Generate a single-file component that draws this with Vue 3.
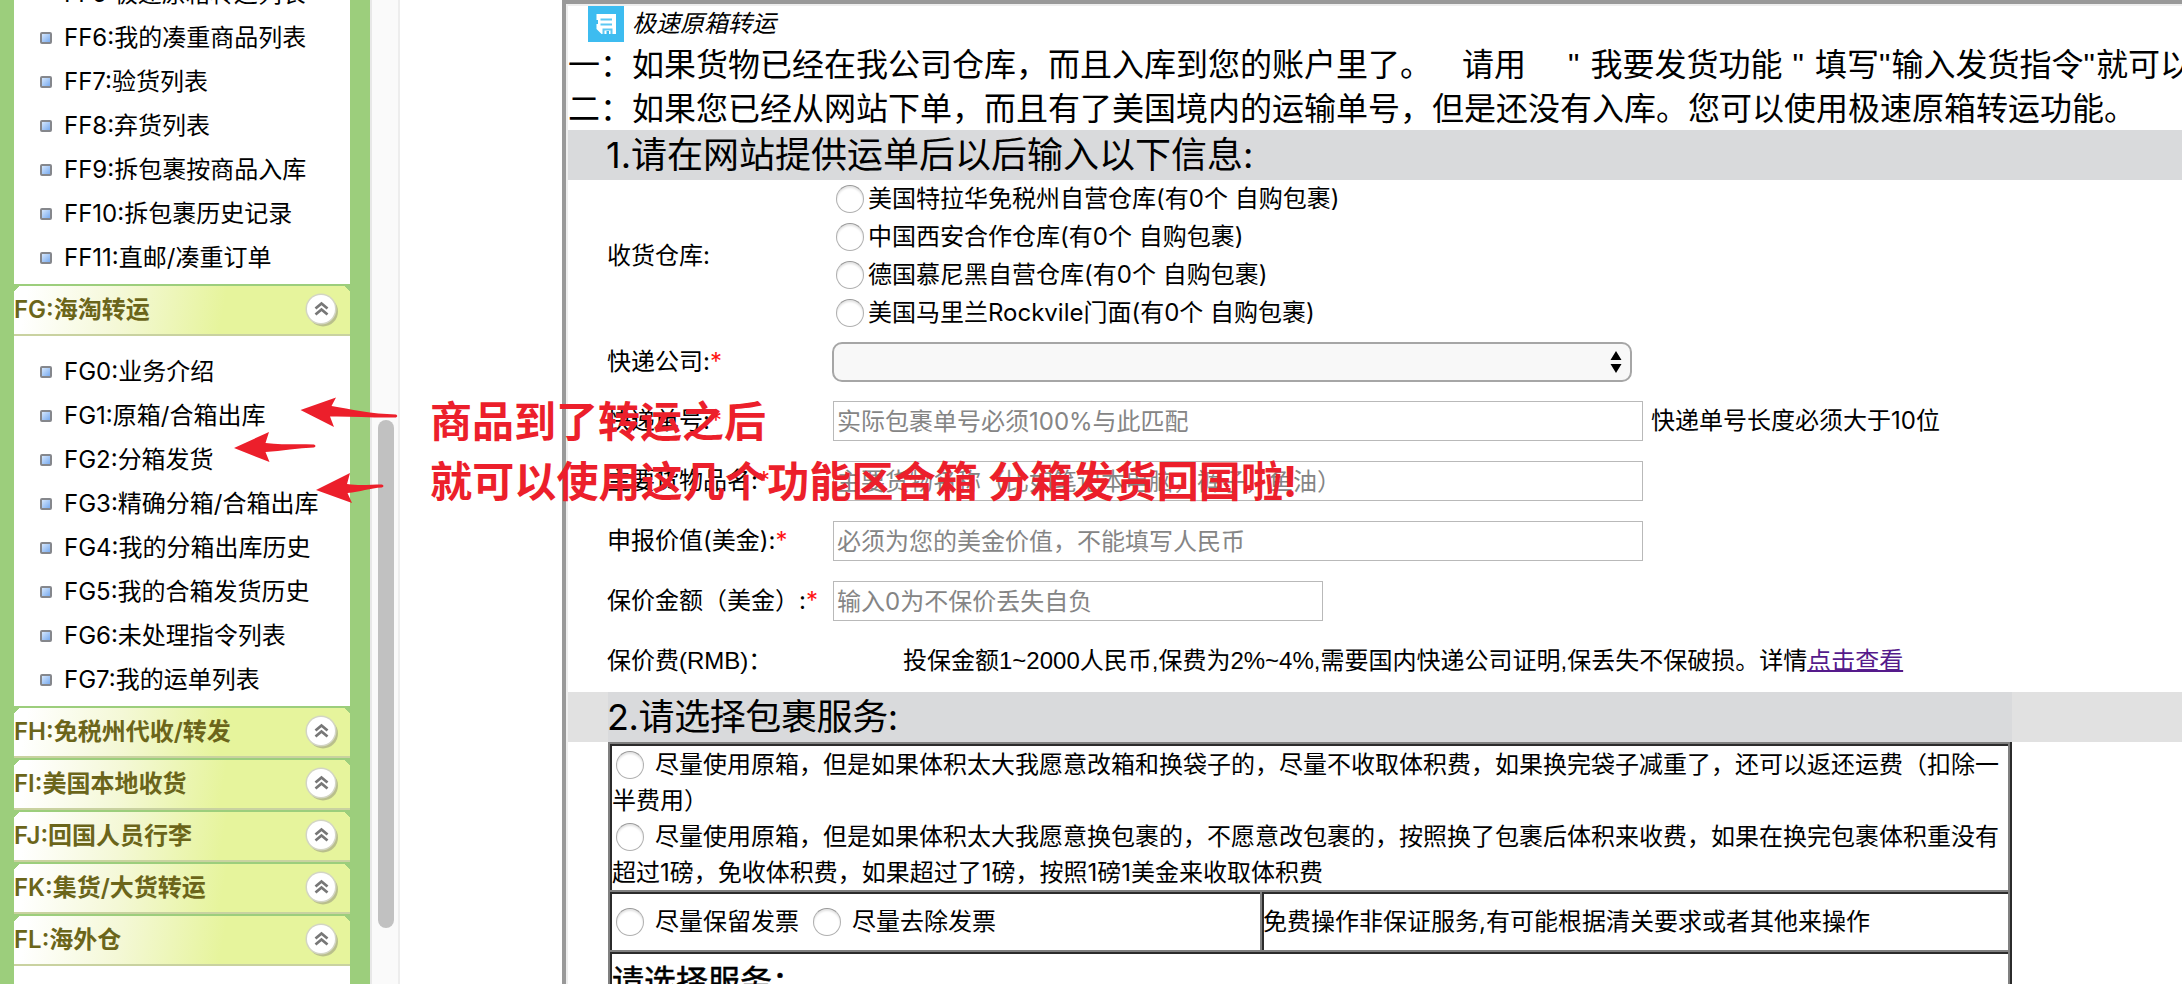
<template>
  <div class="page">
    <aside class="sidebar">
      <div class="menu">
        <template v-for="group in menu" :key="group.title">
          <h3 v-if="group.title" class="menu-title">
            <span>{{ group.title }}</span>
            <svg class="toggle" width="34" height="34" viewBox="0 0 34 34">
              <circle cx="18" cy="18.5" r="15" fill="#a9ae86" opacity="0.75" />
              <circle cx="16" cy="16" r="15.5" fill="#d3d5c4" />
              <circle cx="16" cy="16" r="14" fill="#fff" />
              <path d="M10.5 15.5 L16.5 10.5 L22.5 15.5 M10.5 21.5 L16.5 16.5 L22.5 21.5" fill="none" stroke="#777" stroke-width="2.8" />
            </svg>
          </h3>
          <ul v-if="group.items.length" class="menu-list" :class="{ first: !group.title }">
            <li v-for="item in group.items" :key="item">
              <i class="bullet"></i>{{ item }}
            </li>
          </ul>
        </template>
      </div>
    </aside>
    <div class="scrollbar"><div class="thumb"></div></div>

    <main class="content">
      <div class="title-row">
        <svg class="save-icon" width="36" height="36" viewBox="0 0 36 36">
          <rect width="36" height="36" fill="#3dbcf0" />
          <path d="M8.500 8 H28 V28 H13.500 L8.500 23 V18 H10 V14 H8.500 Z" fill="#fff" />
          <path d="M12.500 13.500 H24 M12.500 18.500 H24" stroke="#5cc8f3" stroke-width="2" />
          <path d="M15.500 28 V23.500 H23.500 V28" fill="none" stroke="#5cc8f3" stroke-width="2" />
          <rect x="18.500" y="25" width="2.500" height="3" fill="#3dbcf0" />
        </svg>
        <em>极速原箱转运</em>
      </div>
      <p class="notice">一：如果货物已经在我公司仓库，而且入库到您的账户里了。<span class="gap-a"></span>请用<span class="gap-b"></span><q>"</q><span class="sp"></span>我要发货功能<span class="sp"></span><q>"</q><span class="sp"></span>填写<q>"</q>输入发货指令<q>"</q>就可以了</p>
      <p class="notice">二：如果您已经从网站下单，而且有了美国境内的运输单号，但是还没有入库。您可以使用极速原箱转运功能。</p>

      <h2 class="section">1.请在网站提供运单后以后输入以下信息:</h2>

      <div class="row warehouses">
        <label class="name">收货仓库:</label>
        <div>
          <label v-for="w in warehouses" :key="w" class="radio-line">
            <i class="radio"></i>{{ w }}
          </label>
        </div>
      </div>
      <div class="row company">
        <label class="name">快递公司:<b>*</b></label>
        <div class="select">
          <svg width="12" height="22" viewBox="0 0 12 22">
            <path d="M6 0 L11.5 9 H0.5 Z M6 22 L11.5 13 H0.5 Z" fill="#000" />
          </svg>
        </div>
      </div>
      <div v-for="f in fields" :key="f.label" class="row">
        <label class="name">{{ f.label }}<b>*</b></label>
        <input type="text" :class="{ short: f.short }" :placeholder="f.placeholder" />
        <span v-if="f.hint" class="hint">{{ f.hint }}</span>
      </div>
      <div class="row fee">
        <label class="name">保价费(RMB)：</label>
        <span class="fee-text">投保金额1~2000人民币,保费为2%~4%,需要国内快递公司证明,保丢失不保破损。详情<a href="#">点击查看</a></span>
      </div>

      <div class="section-wrap">
        <h2 class="section inner">2.请选择包裹服务:</h2>
      </div>

      <div class="services">
        <div class="cell full">
          <p><i class="radio"></i>尽量使用原箱，但是如果体积太大我愿意改箱和换袋子的，尽量不收取体积费，如果换完袋子减重了，还可以返还运费（扣除一</p>
          <p>半费用）</p>
          <p><i class="radio"></i>尽量使用原箱，但是如果体积太大我愿意换包裹的，不愿意改包裹的，按照换了包裹后体积来收费，如果在换完包裹体积重没有</p>
          <p>超过1磅，免收体积费，如果超过了1磅，按照1磅1美金来收取体积费</p>
        </div>
        <div class="cell invoice">
          <i class="radio"></i>尽量保留发票
          <i class="radio second"></i>尽量去除发票
        </div>
        <div class="cell last">免费操作非保证服务,有可能根据清关要求或者其他来操作</div>
        <div class="cell full choose">请选择服务：</div>
      </div>
    </main>

    <!-- red annotations over the page -->
    <svg class="arrows" width="420" height="984" viewBox="0 0 420 984" fill="#ec1f2b">
      <path d="M300.5 410 L336 397.5 L331.5 406 C350 409 372 414 396 414.5 Q398.500 416 396 417.500 C372 418 350 416 330 416.500 L334 427 Z" />
      <path d="M234 448 L269 432 L265.500 443 C282 445 298 444 314 444.500 Q317 446 314 447.500 C298 448 282 451 265.500 452 L269.500 462 Z" />
      <path d="M316 490 L350 473 L347 484 C360 486 370 484.500 382 484.500 Q385 486 382 487.500 C370 488 360 492 347.500 493 L352 503 Z" />
    </svg>
    <div class="remark">
      <p>商品到了转运之后</p>
      <p class="wide">就可以使用这几个功能区合箱 分箱发货回国啦!</p>
    </div>
  </div>
</template>

<script setup>
const menu = [
  {
    title: '',
    items: [
      'FF5:极速原箱转运列表',
      'FF6:我的凑重商品列表',
      'FF7:验货列表',
      'FF8:弃货列表',
      'FF9:拆包裹按商品入库',
      'FF10:拆包裹历史记录',
      'FF11:直邮/凑重订单',
    ],
  },
  {
    title: 'FG:海淘转运',
    items: [
      'FG0:业务介绍',
      'FG1:原箱/合箱出库',
      'FG2:分箱发货',
      'FG3:精确分箱/合箱出库',
      'FG4:我的分箱出库历史',
      'FG5:我的合箱发货历史',
      'FG6:未处理指令列表',
      'FG7:我的运单列表',
    ],
  },
  { title: 'FH:免税州代收/转发', items: [] },
  { title: 'FI:美国本地收货', items: [] },
  { title: 'FJ:回国人员行李', items: [] },
  { title: 'FK:集货/大货转运', items: [] },
  { title: 'FL:海外仓', items: [] },
];

const warehouses = [
  '美国特拉华免税州自营仓库(有0个 自购包裹)',
  '中国西安合作仓库(有0个 自购包裹)',
  '德国慕尼黑自营仓库(有0个 自购包裹)',
  '美国马里兰Rockvile门面(有0个 自购包裹)',
];

const fields = [
  { label: '快递单号:', placeholder: '实际包裹单号必须100%与此匹配', hint: '快递单号长度必须大于10位' },
  { label: '主要货物品名:', placeholder: '主要货物名称（比如笔记本电脑，裤子，鱼油）' },
  { label: '申报价值(美金):', placeholder: '必须为您的美金价值，不能填写人民币' },
  { label: '保价金额（美金）:', placeholder: '输入0为不保价丢失自负', short: true },
];
</script>

<style>
body {
  margin: 0;
  overflow: hidden;
}
</style>

<style scoped>
.page {
  position: relative;
  display: flex;
  width: 2182px;
  height: 984px;
  overflow: hidden;
  background: #fff;
  color: #000;
  font: 24px/36px Inter, "Noto Sans CJK SC", sans-serif;
  white-space: nowrap;
}

p,
h2,
h3,
ul {
  margin: 0;
  padding: 0;
  font-weight: normal;
}

/* left menu */
.sidebar {
  flex: none;
  box-sizing: border-box;
  width: 370px;
  height: 984px;
  padding: 0 20px 0 14px;
  overflow: hidden;
  background: #9cce7c;
}

.menu {
  display: flow-root;
  height: 984px;
  background: #fff;
}

.menu-list {
  padding: 14px 0 4px;
  list-style: none;
}

.menu-list.first {
  padding-top: 0;
  margin-top: -28px;
}

.menu-list li {
  display: flex;
  align-items: center;
  height: 44px;
  padding-left: 26px;
  line-height: 44px;
}

.bullet {
  box-sizing: border-box;
  width: 12px;
  height: 12px;
  margin-right: 12px;
  border: 2px solid #85878c;
  border-radius: 2px;
  background: linear-gradient(135deg, #d5e7fd, #79abef);
}

.menu-title {
  display: flex;
  align-items: center;
  justify-content: space-between;
  box-sizing: border-box;
  height: 52px;
  padding: 0 11px 1px 0;
  border-top: 2px solid #9cce7c;
  border-bottom: 2px solid #c9d2a0;
  background:
    linear-gradient(135deg, #9cce7c 4px, transparent 4px),
    linear-gradient(225deg, #9cce7c 4px, transparent 4px),
    linear-gradient(100deg, #fff 4%, #f4f8d6 32%, #e6f49c 62%, #e6f49c);
  color: #6b651a;
  font-size: 24px;
  font-weight: 600;
}

.scrollbar {
  flex: none;
  box-sizing: border-box;
  width: 30px;
  padding: 420px 0 0 6px;
  border-left: 2px solid #e8e8e8;
  border-right: 2px solid #ededed;
  background: #fafafa;
}

.thumb {
  width: 16px;
  height: 508px;
  border-radius: 8px;
  background: #c1c1c1;
}

/* right frame */
.content {
  flex: 1;
  min-width: 0;
  box-sizing: border-box;
  margin-left: 162px;
  border-top: 4px solid #999;
  border-left: 4px solid #999;
  box-shadow: inset 2px 2px 0 #eee;
  padding: 2px 0 0 2px;
  overflow: hidden;
}

.title-row {
  display: flex;
  align-items: center;
  height: 36px;
  padding-left: 20px;
}

.save-icon {
  margin-right: 8px;
}

.notice {
  height: 44px;
  font-size: 32px;
  line-height: 45px;
}

.notice q {
  display: inline-block;
  width: 12.5px;
  quotes: none;
  font-family: "Liberation Sans", sans-serif;
}

.gap-a {
  display: inline-block;
  width: 30px;
}

.gap-b {
  display: inline-block;
  width: 42px;
}

.sp {
  display: inline-block;
  width: 10px;
}

.section {
  height: 50px;
  padding-left: 38px;
  background: #d9dadc;
  font-size: 36px;
  line-height: 50px;
}

.section-wrap {
  margin-top: 1px;
  padding-left: 40px;
  background: #e1e1e1;
}

.section.inner {
  width: 1404px;
  padding-left: 0;
  letter-spacing: -0.4px;
  text-indent: -1px;
}

.row {
  display: flex;
  align-items: center;
  height: 60px;
}

.row.warehouses {
  height: 152px;
  padding-bottom: 1px;
}

.row.company {
  height: 58px;
}

.name {
  flex: none;
  width: 226px;
  padding-left: 39px;
}

.name b {
  color: #ff1414;
  font-weight: normal;
}

.radio-line {
  display: flex;
  align-items: center;
  height: 38px;
  padding-left: 3px;
}

.radio {
  display: inline-block;
  flex: none;
  box-sizing: border-box;
  width: 28px;
  height: 28px;
  margin-right: 4px;
  border: 1px solid #b0b0b0;
  border-top-color: #999;
  border-radius: 50%;
  background: #fff;
  box-shadow: inset 0 2px 2px #e4e4e4;
}

.select {
  display: flex;
  align-items: center;
  justify-content: flex-end;
  box-sizing: border-box;
  width: 800px;
  height: 40px;
  margin-left: -1px;
  padding-right: 8px;
  border: 2px solid #a6a6a6;
  border-radius: 10px;
  background: #f8f8f8;
}

input {
  box-sizing: border-box;
  width: 810px;
  height: 40px;
  padding: 0 3px;
  border: 1px solid #b9b9b9;
  border-radius: 0;
  background: #fff;
  font: inherit;
}

input.short {
  width: 490px;
}

input::placeholder {
  color: #858585;
  opacity: 1;
}

.hint {
  margin-left: 8px;
}

.fee {
  font-family: "Liberation Sans", "Noto Sans CJK SC", sans-serif;
}

.fee-text {
  margin-left: 70px;
}

.fee-text a {
  color: #551a8b;
  text-decoration: underline;
  text-decoration-thickness: 2px;
}

/* bordered table of services */
.services {
  display: grid;
  grid-template-columns: 652px 750px;
  grid-template-rows: 148px 60px 60px;
  width: 1402px;
  margin-left: 40px;
  border-right: 2px solid #2b2b2b;
}

.cell {
  display: flex;
  align-items: center;
  box-sizing: border-box;
  padding: 2px 0 0 2px;
  border-top: 2px solid #808080;
  border-left: 2px solid #808080;
  box-shadow: inset 2px 2px 0 #2b2b2b;
}

.cell.full {
  grid-column: 1 / 3;
  border-right: 2px solid #808080;
}

.cell.last {
  padding-left: 1px;
  border-right: 2px solid #808080;
}

.cell.full:first-child {
  display: block;
}

.cell p {
  display: flex;
  align-items: center;
  height: 36px;
  padding-top: 1px;
  box-sizing: border-box;
}

.cell .radio {
  margin-left: 4px;
  margin-right: 11px;
}

.cell .radio.second {
  margin-left: 14px;
}

.cell.choose {
  font-size: 32px;
  -webkit-text-stroke: 0.5px #000;
}

/* annotations */
.arrows {
  position: absolute;
  left: 0;
  top: 0;
}

.remark {
  position: absolute;
  left: 430px;
  top: 392px;
  color: #ec1f2b;
  font-size: 42px;
  line-height: 60px;
}

.remark p {
  font-weight: bold;
}

.remark .wide {
  letter-spacing: 0.15px;
}
</style>
